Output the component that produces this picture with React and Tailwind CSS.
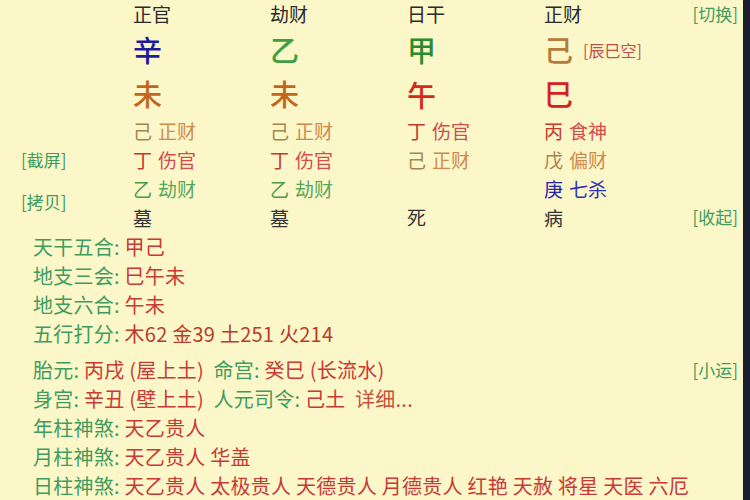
import React from 'react';

const pillars = [
  {
    label: '正官',
    stem: { ch: '辛', color: 'text-[#1c1ca0]' },
    branch: { ch: '未', color: 'text-[#c2661c]' },
    hidden: [
      { gan: '己', ganColor: 'text-[#a8844c]', god: '正财', godColor: 'text-[#cf8a4c]' },
      { gan: '丁', ganColor: 'text-[#c23a2c]', god: '伤官', godColor: 'text-[#d24c4c]' },
      { gan: '乙', ganColor: 'text-[#4c9a4c]', god: '劫财', godColor: 'text-[#58a858]' },
    ],
    state: '墓',
  },
  {
    label: '劫财',
    stem: { ch: '乙', color: 'text-[#3ca042]' },
    branch: { ch: '未', color: 'text-[#c2661c]' },
    hidden: [
      { gan: '己', ganColor: 'text-[#a8844c]', god: '正财', godColor: 'text-[#cf8a4c]' },
      { gan: '丁', ganColor: 'text-[#c23a2c]', god: '伤官', godColor: 'text-[#d24c4c]' },
      { gan: '乙', ganColor: 'text-[#4c9a4c]', god: '劫财', godColor: 'text-[#58a858]' },
    ],
    state: '墓',
  },
  {
    label: '日干',
    stem: { ch: '甲', color: 'text-[#2a8c2e]' },
    branch: { ch: '午', color: 'text-[#d42a1c]' },
    hidden: [
      { gan: '丁', ganColor: 'text-[#c23a2c]', god: '伤官', godColor: 'text-[#d24c4c]' },
      { gan: '己', ganColor: 'text-[#a8844c]', god: '正财', godColor: 'text-[#cf8a4c]' },
    ],
    state: '死',
  },
  {
    label: '正财',
    stem: { ch: '己', color: 'text-[#b67a3a]' },
    note: '[辰巳空]',
    branch: { ch: '巳', color: 'text-[#d42222]' },
    hidden: [
      { gan: '丙', ganColor: 'text-[#c23a2c]', god: '食神', godColor: 'text-[#d24c4c]' },
      { gan: '戊', ganColor: 'text-[#a8844c]', god: '偏财', godColor: 'text-[#cf8a4c]' },
      { gan: '庚', ganColor: 'text-[#2626a6]', god: '七杀', godColor: 'text-[#3030b4]' },
    ],
    state: '病',
  },
];

const Label = ({ children }) => <span className="text-[#3f9c5e]">{children}</span>;
const Val = ({ children }) => <span className="text-[#c83a36]">{children}</span>;

const Pillar = ({ p }) => (
  <div className="w-[137px] flex flex-col">
    <div className="h-[28px] flex items-center text-[19px] text-[#2a2a2a]">{p.label}</div>
    <div className="h-[44px] flex items-center">
      <span className={`text-[29px] font-medium ${p.stem.color}`}>{p.stem.ch}</span>
      {p.note && <span className="ml-[10px] text-[16px] text-[#c0504a]">{p.note}</span>}
    </div>
    <div className="h-[46px] flex items-center">
      <span className={`text-[29px] font-medium ${p.branch.color}`}>{p.branch.ch}</span>
    </div>
    <div className="h-[87px] flex flex-col">
      {p.hidden.map((h, i) => (
        <div key={i} className="h-[29px] flex items-center text-[19px]">
          <span className={h.ganColor}>{h.gan}</span>
          <span className={`ml-[6px] ${h.godColor}`}>{h.god}</span>
        </div>
      ))}
    </div>
    <div className="h-[29px] flex items-center text-[19px] text-[#333333]">{p.state}</div>
  </div>
);

export default function App() {
  return (
    <div
      className="w-[750px] h-[500px] overflow-hidden flex"
      style={{ fontFamily: '"Noto Sans CJK SC", "Noto Sans", sans-serif' }}
    >
      <div className="flex-1 bg-[#fbf7c9] flex flex-col">
        <div className="flex h-[232px]">
          <div className="w-[133px] pl-[21px] pt-[149px] flex flex-col gap-[20px] text-[17px] text-[#3f9c5e]">
            <div className="h-[22px] flex items-center">[截屏]</div>
            <div className="h-[22px] flex items-center">[拷贝]</div>
          </div>
          {pillars.map((p, i) => (
            <Pillar key={i} p={p} />
          ))}
          <div className="flex-1 flex flex-col justify-between items-end pr-[5px] text-[17px] text-[#3f9c5e]">
            <div className="h-[28px] flex items-center">[切换]</div>
            <div className="h-[29px] flex items-center mb-[1px]">[收起]</div>
          </div>
        </div>

        <div className="pl-[33px] text-[20px] leading-[29px] tracking-[0.25px]">
          <div><Label>天干五合: </Label><Val>甲己</Val></div>
          <div><Label>地支三会: </Label><Val>巳午未</Val></div>
          <div><Label>地支六合: </Label><Val>午未</Val></div>
          <div>
            <Label>五行打分: </Label>
            <span className="text-[#b83c2c]">木62 金39 土251 火214</span>
          </div>
        </div>

        <div className="mt-[7px] pl-[33px] pr-[5px] text-[20px] leading-[29px] tracking-[0.25px]">
          <div className="flex justify-between">
            <div>
              <Label>胎元: </Label><Val>丙戌 (屋上土)</Val>
              <Label>&nbsp;&nbsp;命宫: </Label><Val>癸巳 (长流水)</Val>
            </div>
            <span className="text-[17px] tracking-normal text-[#3f9c5e]">[小运]</span>
          </div>
          <div>
            <Label>身宫: </Label><Val>辛丑 (壁上土)</Val>
            <Label>&nbsp;&nbsp;人元司令: </Label><Val>己土</Val>
            <span className="text-[#c8503a]">&nbsp;&nbsp;详细...</span>
          </div>
          <div><Label>年柱神煞: </Label><Val>天乙贵人</Val></div>
          <div><Label>月柱神煞: </Label><Val>天乙贵人 华盖</Val></div>
          <div className="whitespace-nowrap">
            <Label>日柱神煞: </Label>
            <Val>天乙贵人 太极贵人 天德贵人 月德贵人 红艳 天赦 将星 天医 六厄</Val>
          </div>
        </div>
      </div>
      <div className="w-[7px] bg-[#18202e]" />
    </div>
  );
}
